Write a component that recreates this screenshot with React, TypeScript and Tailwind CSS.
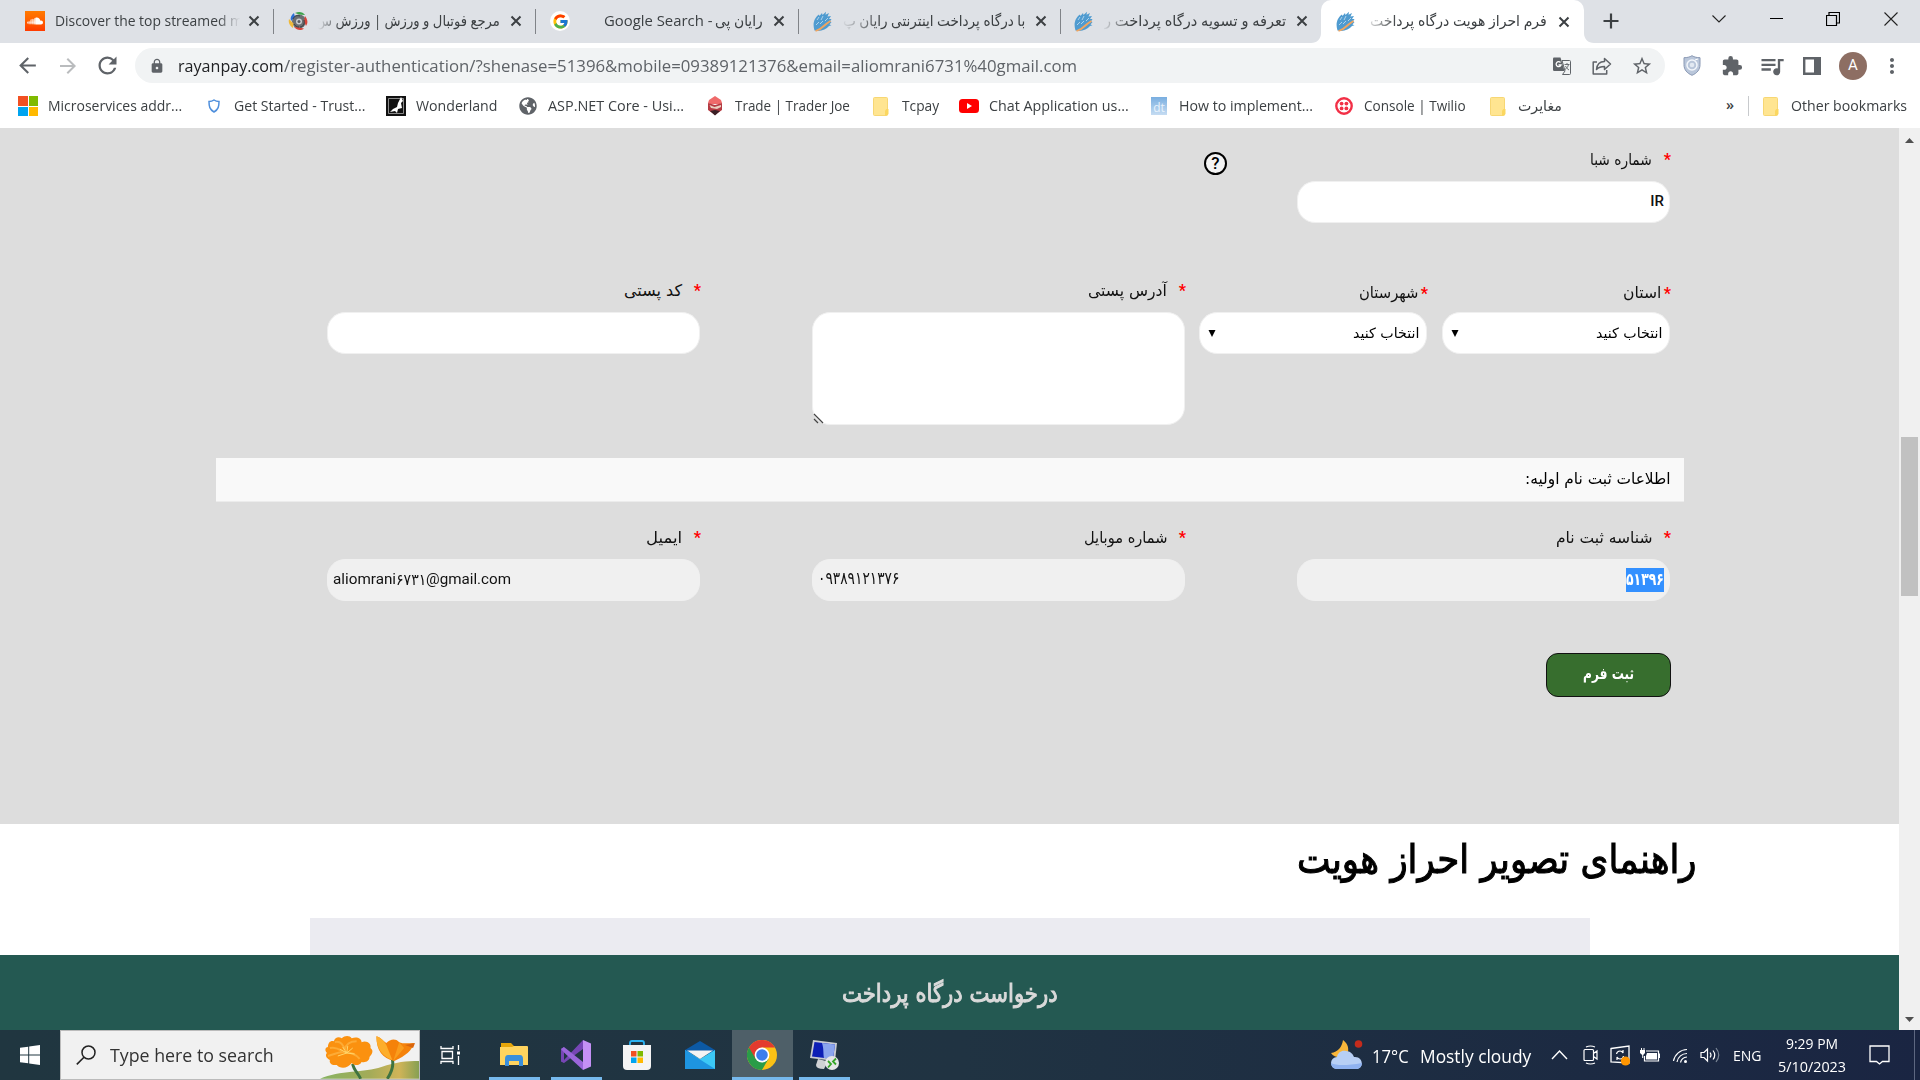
import React, { useLayoutEffect, useRef } from "react";
import {
  MdArrowBack,
  MdArrowForward,
  MdRefresh,
  MdLock,
  MdStarBorder,
  MdExtension,
  MdQueueMusic,
  MdMoreVert,
} from "react-icons/md";
import { FcGoogle } from "react-icons/fc";
import { FaSoundcloud, FaGlobeAmericas } from "react-icons/fa";

/* Single line of text stretched or condensed to the width of its own box. */
function Fit({ className, children, rtl = false }: { className: string; children: React.ReactNode; rtl?: boolean }) {
  const box = useRef<HTMLDivElement>(null);
  const text = useRef<HTMLSpanElement>(null);
  useLayoutEffect(() => {
    if (box.current && text.current) {
      const k = box.current.clientWidth / text.current.offsetWidth;
      text.current.style.transform = `scaleX(${k})`;
    }
  }, []);
  return (
    <div ref={box} dir={rtl ? "rtl" : "ltr"} className={"shrink-0 whitespace-nowrap " + className}>
      <span ref={text} className={rtl ? "inline-block origin-right" : "inline-block origin-left"}>
        {children}
      </span>
    </div>
  );
}

function CloseX({ className = "" }: { className?: string }) {
  return (
    <svg viewBox="0 0 12 12" className={"h-[12px] w-[12px] shrink-0 " + className}>
      <path d="M1.5 1.5l9 9M10.5 1.5l-9 9" stroke="#3c4043" strokeWidth="2" />
    </svg>
  );
}

function RayanIcon() {
  return (
    <svg viewBox="0 0 20 21" className="h-[21px] w-[20px] shrink-0">
      <path d="M1.500 19.500C-1 12 2 6 6 3.500l.5 1.500L9 2l.5 2L13 .8l-.5 3L16 2l-1.500 3.500L18 5l-2 3 2.500 0-1.500 2.500 1.500 .5-2 2.500 2 .8-2.500 .8C13 19 7 21 1.500 19.500z" fill="#4f9bd0" />
      <path d="M4 9l2-3M8 9l2-4M3 14l3-3M12 10l3-3M7 13l3-3" stroke="#d8e9f5" strokeWidth=".7" />
      <path d="M2.500 20c5-1.500 7-3.500 9.500-6 2-2 4-3 5.500-4" stroke="#f0a560" strokeWidth="1.800" fill="none" />
    </svg>
  );
}

function Folder() {
  return (
    <svg viewBox="0 0 16 19" className="h-[19px] w-[16px] shrink-0">
      <rect x=".5" y=".5" width="14" height="18" rx="1" fill="#ffe591" stroke="#f7d774" />
      <path d="M12 18.500v-5l1.500-1.500h2v5l-1.500 1.500z" fill="#fbd75f" />
    </svg>
  );
}

function PinwheelIcon() {
  return (
    <svg viewBox="0 0 20 20" className="h-[20px] w-[20px] shrink-0">
      <circle cx="11" cy="10.500" r="7" fill="#6b6e72" />
      <circle cx="11" cy="10.500" r="3" fill="#c9ccd0" />
      <circle cx="11" cy="10.500" r="1.500" fill="#5b5e62" />
      <path d="M6 2c-3 2-4 5-3 8l4-4z" fill="#2b6fd6" />
      <path d="M7 2c4-2 8-1 10 2l-6-.5z" fill="#3ba24b" />
      <path d="M1 8c-1 4 1 7 4 9l.5-4.500z" fill="#efb93a" />
      <path d="M17 5c3 4 3 7 1 10l-2-5z" fill="#d8443a" />
      <path d="M6 16c3 3.500 7 4 10 1.500l-5-1z" fill="#d8443a" />
      <path d="M5 8c1-3 4-4 7-3M16 9c1 4-1 7-4 7M6 13c1 2 3 3 5 3" stroke="#3c3e42" fill="none" />
    </svg>
  );
}

const sep = "h-[25px] w-[1px] shrink-0 bg-[#808388]";

function TabStrip() {
  return (
    <div className="flex h-[43px] items-start bg-[#dee1e6] text-[15px] text-[#3c4043]">
      <div className="flex h-[42px] w-[1311px] shrink-0 items-center">
        <div className="ml-[25px] flex h-[20px] w-[20px] shrink-0 items-center justify-center bg-gradient-to-b from-[#ff7a00] to-[#ff3a00]">
          <FaSoundcloud className="h-[16px] w-[16px] text-white" />
        </div>
        <div className="ml-[10px] w-[188px] shrink-0 pb-[1px] [mask-image:linear-gradient(to_right,#000_163px,transparent_185px)]">
          <Fit className="w-[188px]">Discover the top streamed m</Fit>
        </div>
        <CloseX className="ml-[5px]" />
        <div className={"ml-[13px] " + sep} />
        <div className="ml-[14px]"><PinwheelIcon /></div>
        <div className="ml-[8px] w-[184px] shrink-0 pb-[1px] [mask-image:linear-gradient(to_left,#000_160px,transparent_182px)]">
          <Fit rtl className="w-[184px]">مرجع فوتبال و ورزش | ورزش س</Fit>
        </div>
        <CloseX className="ml-[10px]" />
        <div className={"ml-[13px] " + sep} />
        <div className="ml-[14px] flex h-[20px] w-[20px] shrink-0 items-center justify-center rounded-full bg-white">
          <FcGoogle className="h-[17px] w-[17px]" />
        </div>
        <Fit className="ml-[34px] w-[108px] pb-[1px]">Google Search -</Fit>
        <Fit rtl className="ml-[3px] w-[48px] pb-[1px]">رایان پی</Fit>
        <CloseX className="ml-[10px]" />
        <div className={"ml-[13px] " + sep} />
        <div className="ml-[14px]"><RayanIcon /></div>
        <div className="ml-[10px] w-[182px] shrink-0 pb-[1px] [mask-image:linear-gradient(to_left,#000_145px,transparent_184px)]">
          <Fit rtl className="w-[182px]">با درگاه پرداخت اینترنتی رایان پ</Fit>
        </div>
        <CloseX className="ml-[10px]" />
        <div className={"ml-[13px] " + sep} />
        <div className="ml-[13px]"><RayanIcon /></div>
        <div className="ml-[10px] w-[182px] shrink-0 pb-[1px] [mask-image:linear-gradient(to_left,#000_155px,transparent_184px)]">
          <Fit rtl className="w-[182px]">تعرفه و تسویه درگاه پرداخت ر</Fit>
        </div>
        <CloseX className="ml-[10px]" />
      </div>
      <svg viewBox="0 0 10 43" className="h-[43px] w-[10px] shrink-0">
        <path d="M10 33v10H0c6 0 10-4 10-10z" fill="#fff" />
      </svg>
      <div className="flex h-[43px] w-[263px] shrink-0 items-center rounded-t-[10px] bg-white">
        <div className="ml-[15px]"><RayanIcon /></div>
        <div className="ml-[14px] w-[177px] shrink-0 pb-[2px] [mask-image:linear-gradient(to_left,#000_150px,rgba(0,0,0,0.2)_177px)]">
          <Fit rtl className="w-[177px]">فرم احراز هویت درگاه پرداخت</Fit>
        </div>
        <CloseX className="ml-[11px]" />
      </div>
      <svg viewBox="0 0 10 43" className="h-[43px] w-[10px] shrink-0">
        <path d="M0 33v10h10C4 43 0 39 0 33z" fill="#fff" />
      </svg>
      <svg viewBox="0 0 16 16" className="mt-[13px] ml-[9px] h-[16px] w-[16px] shrink-0">
        <path d="M8 .5v15M.5 8h15" stroke="#3c4043" strokeWidth="2.200" />
      </svg>
      <svg viewBox="0 0 14 8" className="mt-[15px] ml-[93px] h-[8px] w-[14px] shrink-0">
        <path d="M.5 .5L7 7 13.500 .5" stroke="#222" strokeWidth="1.100" fill="none" />
      </svg>
      <div className="mt-[18px] ml-[44px] h-[1px] w-[13px] shrink-0 bg-black" />
      <svg viewBox="0 0 14 14" className="mt-[12px] ml-[43px] h-[14px] w-[14px] shrink-0">
        <path d="M.5 3.500h10v10H.5zM3 3.500V.5h10.500v10.500h-3" stroke="#000" strokeWidth="1.200" fill="none" />
      </svg>
      <svg viewBox="0 0 14 14" className="mt-[12px] ml-[44px] h-[14px] w-[14px] shrink-0">
        <path d="M.5 .5l13 13M13.500 .5l-13 13" stroke="#222" strokeWidth="1.100" />
      </svg>
    </div>
  );
}

function Toolbar() {
  return (
    <div className="flex h-[45px] items-center bg-white text-[#5f6368]">
      <MdArrowBack className="ml-[15px] h-[25px] w-[25px] shrink-0" />
      <MdArrowForward className="ml-[16px] h-[24px] w-[24px] shrink-0 text-[#babcbe]" />
      <MdRefresh className="ml-[14px] h-[27px] w-[27px] shrink-0" />
      <div className="ml-[14px] flex h-[35px] w-[1530px] shrink-0 items-center rounded-full bg-[#f1f3f4]">
        <MdLock className="ml-[14px] h-[16px] w-[16px] shrink-0" />
        <Fit className="ml-[13px] w-[106px] text-[17px] text-[#202124]">rayanpay.com</Fit>
        <Fit className="w-[793px] text-[17px] text-[#5f6368]">
          /register-authentication/?shenase=51396&amp;mobile=09389121376&amp;email=aliomrani6731%40gmail.com
        </Fit>
        <svg viewBox="0 0 18 18" className="ml-[476px] h-[18px] w-[18px] shrink-0">
          <path d="M1 .5h6.500L11.500 14H1.200Q0 14 0 12.800V1.500Q0 .5 1 .5z" fill="#5f6368" />
          <path d="M9 3.500h7.500q1 0 1 1v12q0 1-1 1H9.500L12 14z" fill="#f1f3f4" stroke="#5f6368" />
          <path d="M7.500 5.500A2.500 2.500 0 1 0 8 8H5.500" stroke="#fff" strokeWidth="1.300" fill="none" />
          <path d="M11.500 7.500h5M14 6v1.500M15.500 7.500c-.5 2.500-2 4-3.500 5M12.500 9c1 2 2 3 3.500 4" stroke="#5f6368" strokeWidth=".9" fill="none" />
        </svg>
        <svg viewBox="0 0 20 18" className="ml-[21px] h-[18px] w-[20px] shrink-0">
          <path d="M5 5H1.200v12h13.500v-4M4.500 12.500c.5-5 3.500-8 8-8V1.500L18.500 7l-6 5.500V9.500c-3.500 0-6 .8-8 3z" stroke="#5f6368" strokeWidth="1.500" fill="none" strokeLinejoin="round" />
        </svg>
        <MdStarBorder className="ml-[19px] h-[22px] w-[22px] shrink-0" />
      </div>
      <svg viewBox="0 0 18 21" className="ml-[18px] h-[21px] w-[18px] shrink-0">
        <path d="M9 .7c2.500 1.500 5 2 8 2v7c0 5-3 8.500-8 10.600C4 18.200 1 14.700 1 9.700v-7c3 0 5.500-.5 8-2z" fill="#b9c6da" stroke="#8998b3" />
        <circle cx="9" cy="10" r="5" fill="none" stroke="#f2f6fb" strokeWidth="1.500" />
        <circle cx="9" cy="10" r="2.300" fill="#e2e9f2" />
        <path d="M12 5l3-1" stroke="#fff" />
      </svg>
      <MdExtension className="ml-[20px] h-[22px] w-[22px] shrink-0" />
      <MdQueueMusic className="ml-[15px] h-[28px] w-[28px] shrink-0" />
      <svg viewBox="0 0 18 18" className="ml-[17px] h-[18px] w-[18px] shrink-0">
        <path d="M1.200 1.200h15.600v15.600H1.200z" fill="none" stroke="#5f6368" strokeWidth="2.400" />
        <path d="M11 1h6v16h-6z" fill="#5f6368" />
      </svg>
      <div className="ml-[18px] flex h-[28px] w-[28px] shrink-0 items-center justify-center rounded-full bg-[#8d6e63] font-[Roboto] text-[15px] text-white">
        A
      </div>
      <MdMoreVert className="ml-[13px] h-[24px] w-[24px] shrink-0" />
    </div>
  );
}

function Bookmarks() {
  return (
    <div className="flex h-[40px] items-center bg-white pb-[4px] text-[14.500px] text-[#3c4043]">
      <div className="ml-[18px] grid h-[20px] w-[20px] shrink-0 grid-cols-2 gap-[1px]">
        <i className="bg-[#f25022]" /><i className="bg-[#7fba00]" /><i className="bg-[#00a4ef]" /><i className="bg-[#ffb900]" />
      </div>
      <Fit className="ml-[10px] w-[134px]">Microservices addr...</Fit>
      <svg viewBox="0 0 12 14" className="ml-[26px] h-[14px] w-[12px] shrink-0">
        <path d="M6 1c1.500 1 3 1.400 5 1.400 0 5-.6 8-5 10.600C1.600 10.400 1 7.400 1 2.400 3 2.400 4.500 2 6 1z" fill="none" stroke="#4f8fdc" strokeWidth="1.500" />
      </svg>
      <Fit className="ml-[14px] w-[131px]">Get Started - Trust...</Fit>
      <svg viewBox="0 0 20 20" className="ml-[21px] h-[20px] w-[20px] shrink-0">
        <path d="M0 0h20v20H0z" fill="#111" />
        <path d="M2.500 2.500h15v15h-15z" stroke="#aaa" strokeWidth=".8" fill="none" />
        <path d="M15 1l2 4-2 2 1 5-4 1-1 4-2-2-5 1 3-3 4-2 1-4z" fill="#fff" />
      </svg>
      <Fit className="ml-[10px] w-[81px]">Wonderland</Fit>
      <div className="ml-[22px]"><FaGlobeAmericas className="h-[18px] w-[18px] text-[#5f6368]" /></div>
      <Fit className="ml-[11px] w-[136px]">ASP.NET Core - Usi...</Fit>
      <svg viewBox="0 0 16 20" className="ml-[23px] h-[20px] w-[16px] shrink-0">
        <path d="M8 0l6 4 1 3-2 1H3L1 7l1-3z" fill="#ef6a6a" />
        <path d="M1 7l7 2 7-2v7l-7 5-7-5z" fill="#b53a42" />
        <path d="M2.500 9l5 2L14 9v2l-4 2-6-1z" fill="#e9cfc0" />
        <path d="M3 15l5-1 5 1-5 4.500z" fill="#3a2026" />
      </svg>
      <Fit className="ml-[12px] w-[115px]">Trade | Trader Joe</Fit>
      <div className="ml-[23px]"><Folder /></div>
      <Fit className="ml-[13px] w-[37px]">Tcpay</Fit>
      <svg viewBox="0 0 20 14" className="ml-[20px] h-[14px] w-[20px] shrink-0">
        <rect width="20" height="14" rx="3.500" fill="#f00" />
        <path d="M8 4l5 3-5 3z" fill="#fff" />
      </svg>
      <Fit className="ml-[10px] w-[140px]">Chat Application us...</Fit>
      <div className="ml-[22px] flex h-[18px] w-[16px] shrink-0 items-end justify-center bg-gradient-to-b from-[#79aee0] to-[#c5dcf2] text-[12px] leading-[14px] text-[#e8f2fc]">dt</div>
      <Fit className="ml-[12px] w-[134px]">How to implement...</Fit>
      <svg viewBox="0 0 18 18" className="ml-[22px] h-[18px] w-[18px] shrink-0">
        <circle cx="9" cy="9" r="7.700" fill="none" stroke="#f22f46" strokeWidth="2.400" />
        <g fill="#f22f46"><circle cx="6.600" cy="6.600" r="1.900" /><circle cx="11.400" cy="6.600" r="1.900" /><circle cx="6.600" cy="11.400" r="1.900" /><circle cx="11.400" cy="11.400" r="1.900" /></g>
      </svg>
      <Fit className="ml-[11px] w-[102px]">Console | Twilio</Fit>
      <div className="ml-[24px]"><Folder /></div>
      <Fit rtl className="ml-[12px] w-[44px]">مغایرت</Fit>
      <Fit className="ml-[164px] w-[8px] pb-[2px] font-semibold">»</Fit>
      <div className="ml-[14px] h-[20px] w-[1px] shrink-0 bg-[#c8cacd]" />
      <div className="ml-[14px]"><Folder /></div>
      <Fit className="ml-[12px] w-[116px]">Other bookmarks</Fit>
    </div>
  );
}

function Label({ className, children, tight = false }: { className: string; children: React.ReactNode; tight?: boolean }) {
  return (
    <div dir="rtl" className="mb-[7px] flex h-[26px] items-center text-[16px] text-[#111]">
      <span className={tight ? "-mr-[1px] w-[10px] pt-[3px] font-[Roboto] text-[16px] font-bold text-[#f00]" : "-mr-[1px] w-[19px] pb-[3px] font-[Roboto] text-[16px] font-bold text-[#f00]"}>*</span>
      <Fit rtl className={(tight ? "pt-[1px] " : "pb-[2px] ") + className}>{children}</Fit>
    </div>
  );
}

const control = "flex h-[42px] items-center rounded-[18px] border border-[#f0f0f0]";

function Select() {
  return (
    <div className={control + " w-[228px] justify-between bg-white pr-[7px] pl-[8px]"}>
      <Fit rtl className="w-[66px] pt-[1px] text-[14px] text-black">انتخاب کنید</Fit>
      <svg viewBox="0 0 8 7" className="h-[7px] w-[8px]"><path d="M.5 0h7L4 7z" fill="#000" /></svg>
    </div>
  );
}

function FormArea() {
  return (
    <div dir="rtl" className="flex h-[696px] flex-col bg-[#ddd] pt-[20px]">
      <div className="flex h-[75px] items-start pr-[229px]">
        <div className="w-[373px]">
          <Label className="w-[62px]">شماره شبا</Label>
          <div className={control + " bg-white pr-[5px]"}>
            <span className="pb-[2px] font-[Roboto] text-[15px] font-medium text-[#111]">IR</span>
          </div>
        </div>
        <div className="mt-[4px] mr-[70px] flex h-[23px] w-[23px] items-center justify-center rounded-full border-2 border-black bg-[#f4f4f4] font-[Roboto] text-[17px] font-medium text-black">
          ?
        </div>
      </div>

      <div className="mt-[56px] flex h-[146px] items-start pr-[229px]">
        <div className="w-[228px]"><Label tight className="w-[38px]">استان</Label><Select /></div>
        <div className="mr-[15px] w-[228px]"><Label tight className="w-[59px]">شهرستان</Label><Select /></div>
        <div className="mr-[14px] w-[373px]">
          <Label className="w-[79px]">آدرس پستی</Label>
          <div className="flex h-[113px] items-end justify-end rounded-[18px] border border-[#f0f0f0] bg-white">
            <svg viewBox="0 0 11 11" className="h-[11px] w-[11px]"><path d="M1 1l9 9M1 6l4 4" stroke="#444" strokeWidth="1.200" /></svg>
          </div>
        </div>
        <div className="mr-[112px] w-[373px]">
          <Label className="w-[58px]">کد پستی</Label>
          <div className={control + " bg-white"} />
        </div>
      </div>

      <div className="mt-[33px] mr-[215px] flex h-[44px] w-[1468px] items-center border-b border-[#ececec] bg-[#f9f9f9] pr-[13px]">
        <Fit rtl className="w-[146px] pb-[1px] text-[16px] text-black">اطلاعات ثبت نام اولیه:</Fit>
      </div>

      <div className="mt-[24px] flex h-[75px] items-start pr-[229px]">
        <div className="w-[373px]">
          <Label className="w-[97px]">شناسه ثبت نام</Label>
          <div className={control + " bg-[#f0f0f0] pr-[5px]"}>
            <div className="flex h-[24px] w-[38px] items-center bg-[#3390ff]">
              <Fit rtl className="w-[38px] pb-[2px] text-[17px] leading-[22px] font-bold text-white">۵۱۳۹۶</Fit>
            </div>
          </div>
        </div>
        <div className="mr-[112px] w-[373px]">
          <Label className="w-[83px]">شماره موبایل</Label>
          <div dir="ltr" className={control + " bg-[#f0f0f0] pl-[5px] text-[17px] text-[#111]"}>
            <Fit className="w-[81px] pb-[2px]">۰۹۳۸۹۱۲۱۳۷۶</Fit>
          </div>
        </div>
        <div className="mr-[112px] w-[373px]">
          <Label className="w-[36px]">ایمیل</Label>
          <div dir="ltr" className={control + " bg-[#f0f0f0] pb-[1px] pl-[5px] font-[Roboto,'DejaVu_Sans'] text-[15px] text-[#111]"}>
            <Fit className="w-[63px]">aliomrani</Fit>
            <Fit className="w-[30px] text-[16px]">۶۷۳۱</Fit>
            <Fit className="w-[85px]">@gmail.com</Fit>
          </div>
        </div>
      </div>

      <div className="mt-[52px] mr-[228px] flex h-[44px] w-[125px] items-center justify-center rounded-[12px] border border-[#111] bg-[#376e2e]">
        <Fit rtl className="w-[51px] pb-[1px] text-[15.500px] font-bold text-white">ثبت فرم</Fit>
      </div>
    </div>
  );
}

function Page() {
  return (
    <div className="flex h-[902px]">
      <div className="w-[1899px] font-['DejaVu_Sans']">
        <FormArea />
        <div dir="rtl" className="flex h-[131px] flex-col bg-white">
          <div className="mr-[202px] flex h-[94px] items-center pb-[24px]">
            <Fit rtl className="w-[400px] text-[40px] leading-[44px] text-black [-webkit-text-stroke:1.1px_#000]">راهنمای تصویر احراز هویت</Fit>
          </div>
          <div className="mr-[309px] h-[37px] w-[1280px] bg-[#ebebf1]" />
        </div>
        <div className="flex h-[75px] items-center justify-center bg-[#245952]">
          <Fit rtl className="w-[216px] pt-[2px] text-[25px] leading-[30px] text-[#dadada] [-webkit-text-stroke:1px_#dadada]">درخواست درگاه پرداخت</Fit>
        </div>
      </div>
      <div className="flex w-[21px] flex-col items-center bg-[#f0f0f0]">
        <svg viewBox="0 0 9 5" className="mt-[10px] h-[5px] w-[9px]"><path d="M0 5L4.500 0 9 5z" fill="#505050" /></svg>
        <div className="mt-[294px] h-[159px] w-[17px] bg-[#c1c1c1]" />
        <svg viewBox="0 0 9 5" className="mt-[421px] h-[5px] w-[9px]"><path d="M0 0h9L4.500 5z" fill="#505050" /></svg>
      </div>
    </div>
  );
}

function Flowers() {
  return (
    <svg viewBox="0 0 100 48" className="ml-[46px] h-[48px] w-[99px] shrink-0">
      <defs>
        <linearGradient id="hill" x1="0" x2="1">
          <stop offset="0" stopColor="#86b362" />
          <stop offset=".5" stopColor="#a3ab58" />
          <stop offset=".8" stopColor="#d0b458" />
          <stop offset="1" stopColor="#86a052" />
        </linearGradient>
      </defs>
      <path d="M0 48c20-9 45-6 62-12 15-5 25-6 38-6v18z" fill="url(#hill)" />
      <path d="M33 33c1 6 6 10 8 15M73 28c2 8-1 14-5 20" stroke="#3f7340" strokeWidth="3" fill="none" />
      <path d="M8 16c0-5 3-7 6-6 1-4 5-5 8-3 3-3 8-3 10 0 5-2 10 0 10 4 6-2 10 2 9 6 4 3 1 7-1 9 0 4-4 6-8 5-2 4-7 4-10 1-4 6-12 6-15 2-5 1-8-2-7-5-4-2-5-5-3-7-3-3-1-6 1-6z" fill="#fb910f" />
      <path d="M15 11c4-1 8 1 10 8 1-6 5-9 12-9M8 25c5-1 10-4 16-4 7 0 12 2 16 7M10 17c4-1 8 0 12 3" stroke="#fdab35" strokeWidth="2" fill="none" />
      <path d="M27 22l-7-4M27 22l-4-6M27 22l1-7M27 22l6-5M27 22l8 1M27 22l-9 3" stroke="#ffd66a" />
      <path d="M57 5c4 1 6 4 10 7 4-4 9-5 13-1 4 2 9 1 15 1-2 7-8 13-20 18C63 27 57 20 57 5z" fill="#f5820a" />
      <path d="M57 5c4 1 8 5 10 9l6 15C63 25 57 18 57 5z" fill="#fdae2c" />
      <path d="M80 11l-6 19 11-13z" fill="#fa9c1c" />
      <path d="M86 14l10-2-2 5z" fill="#d9650c" />
    </svg>
  );
}

function Taskbar() {
  return (
    <div className="flex h-[50px] items-stretch bg-gradient-to-r from-[#203640] via-[#203342] to-[#1a2542] text-white">
      <div className="flex w-[60px] shrink-0 items-center pl-[20px]">
        <svg viewBox="0 0 20 20" className="h-[20px] w-[20px]">
          <path d="M0 2.800L8.200 1.700v7.800H0zM9.200 1.500L20 0v9.500H9.200zM0 10.500h8.200v7.800L0 17.200zM9.200 10.500H20V20L9.200 18.500z" fill="#fff" />
        </svg>
      </div>
      <div className="flex w-[360px] shrink-0 items-center border border-[#bbb] bg-[#f1f1f1]">
        <svg viewBox="0 0 20 20" className="ml-[15px] h-[20px] w-[20px] shrink-0">
          <circle cx="12.500" cy="7.500" r="6.500" fill="none" stroke="#222" strokeWidth="1.500" />
          <path d="M8 12.200L.8 19.400" stroke="#222" strokeWidth="1.600" />
        </svg>
        <Fit className="ml-[14px] w-[164px] text-[18px] text-[#333]">Type here to search</Fit>
        <Flowers />
      </div>
      <div className="flex w-[69px] shrink-0 items-center pl-[20px]">
        <svg viewBox="0 0 21 20" className="h-[20px] w-[21px]">
          <path d="M1 1v2.500h12V1M2 6.500h10.500v7H2zM1 19v-2.500h12V19M18.500 0v5M18.500 11v9" fill="none" stroke="#fff" strokeWidth="1.300" />
          <path d="M17 6.500h3v3h-3z" fill="#fff" />
        </svg>
      </div>
      <div className="flex w-[51px] shrink-0 items-center justify-center border-b-[3px] border-[#76b9ed]">
        <svg viewBox="0 0 28 23" className="mt-[1px] mr-[1px] h-[23px] w-[28px]">
          <path d="M1 0h10l3 3h13v5H1z" fill="#e5a50a" />
          <path d="M0 4h12l2-1h13q1 0 1 1v18H0z" fill="#ffd45e" />
          <path d="M5 23v-7q0-4 3-4h12q3 0 3 4v7h-4v-5h-10v5z" fill="#3a8fdb" />
        </svg>
      </div>
      <div className="ml-[11px] flex w-[51px] shrink-0 items-center justify-center border-b-[3px] border-[#76b9ed]">
        <svg viewBox="0 0 30 30" className="mt-[3px] mr-[1px] h-[30px] w-[30px]">
          <path d="M0 21.500V9L3 7v15.500z" fill="#7646b5" />
          <path d="M22 0v9L3 23l-3-1.500L3 20z" fill="#7646b5" />
          <path d="M0 9l3-2 19 15v8L3 12.500z" fill="#9a66da" />
          <path d="M22 0l8 3.500v23L22 30z" fill="#c490f5" />
        </svg>
      </div>
      <div className="ml-[20px] flex w-[30px] shrink-0 items-center justify-center">
        <svg viewBox="0 0 30 30" className="h-[30px] w-[30px]">
          <path d="M8 6V3q0-2 2-2h10q2 0 2 2v3" stroke="#2bb3f3" strokeWidth="1.800" fill="none" />
          <path d="M1 5h28v21q0 4-4 4H5q-4 0-4-4z" fill="#f4f4f4" />
          <path d="M9 11h5.500v5.500H9z" fill="#f25022" /><path d="M15.500 11H21v5.500h-5.500z" fill="#7fba00" />
          <path d="M9 17.500h5.500V23H9z" fill="#00a4ef" /><path d="M15.500 17.500H21V23h-5.500z" fill="#ffb900" />
        </svg>
      </div>
      <div className="ml-[33px] flex w-[30px] shrink-0 items-center justify-center">
        <svg viewBox="0 0 30 28" className="h-[28px] w-[30px]">
          <path d="M0 9L15 0l15 9v4H0z" fill="#0c59a4" />
          <path d="M0 9l15 9 15-9v19H0z" fill="#3cc8f5" />
          <path d="M0 9l30 19H0z" fill="#1e95e0" />
          <path d="M2 9.500h26L15 18z" fill="#f4f4f4" />
        </svg>
      </div>
      <div className="ml-[17px] flex w-[61px] shrink-0 items-center justify-center border-b-[3px] border-[#76b9ed] bg-[#4e5f68]">
        <svg viewBox="0 0 30 30" className="mt-[3px] mr-[2px] h-[30px] w-[30px]">
          <circle cx="15" cy="15" r="15" fill="#fbc116" />
          <path d="M15 15L2 7.500A15 15 0 0 0 15 30l6.500-11.200z" fill="#2a9c48" />
          <path d="M2 7.500A15 15 0 0 1 28 7.500H15l-6.500 11.200z" fill="#e33b2e" />
          <circle cx="15" cy="15" r="7.400" fill="#fff" />
          <circle cx="15" cy="15" r="5.800" fill="#3b7ded" />
        </svg>
      </div>
      <div className="ml-[6px] flex w-[51px] shrink-0 items-center justify-center border-b-[3px] border-[#76b9ed]">
        <svg viewBox="0 0 30 30" className="mt-[3px] h-[30px] w-[30px]">
          <path d="M8 19l8 2v4l-2 4q-8 0-8-4z" fill="#d0d2d5" />
          <path d="M3 0l24 3-2 18L0 18z" fill="#c9ccd2" />
          <path d="M4.500 2l20.500 2.500-2 14.500L2 16.500z" fill="#0d1fb5" />
          <path d="M12 3l13 1.500-2 14.500-9-1c-1-5 0-9-2-15z" fill="#8ba5ee" />
          <circle cx="22" cy="23" r="7" fill="#e6e6e6" />
          <path d="M18 21l3 3-3 3.500M26 18.500l-3 3 3 3" stroke="#35a527" strokeWidth="1.800" fill="none" />
        </svg>
      </div>

      <div className="ml-[481px] flex shrink-0 items-center">
        <svg viewBox="0 0 32 30" className="h-[30px] w-[32px]">
          <path d="M12 0c-1 7-5 12-12 13 4 6 14 6 17-1 1-5-1-9-5-12z" fill="#f9b63a" />
          <path d="M6 29a6 6 0 0 1 0-12c1-5 5-7 9-6 4 0 7 3 8 6 10-1 10 12 2 12z" fill="#b7cff5" />
          <path d="M5 29q-5-1-5-6 8 4 31 0 0 5-5 6z" fill="#8fb2f0" />
          <circle cx="27.500" cy="4" r="3.800" fill="#c42b1c" />
        </svg>
        <Fit className="ml-[9px] w-[37px] pt-[2px] text-[18px]">17°C</Fit>
        <Fit className="ml-[11px] w-[111px] pt-[2px] text-[18px]">Mostly cloudy</Fit>
        <svg viewBox="0 0 17 10" className="ml-[20px] h-[10px] w-[17px]"><path d="M1 9l7.500-8L16 9" stroke="#fff" strokeWidth="1.400" fill="none" /></svg>
        <svg viewBox="0 0 15 20" className="ml-[15px] h-[20px] w-[15px]">
          <path d="M3 2q4.500-2 9 0M3 18q4.500 2 9 0M1 5.500q0-1 1-1h7.500q1 0 1 1v9q0 1-1 1H2q-1 0-1-1zM10.500 8.500L14 6v8l-3.500-2.500" stroke="#fff" strokeWidth="1.200" fill="none" />
        </svg>
        <svg viewBox="0 0 21 21" className="ml-[12px] h-[21px] w-[21px]">
          <path d="M1 3.500L19 1v17L1 17z" stroke="#fff" strokeWidth="1.300" fill="none" />
          <path d="M6.500 9q.5-3 3.500-3 2 0 3 2V5M13.500 11q-.5 3-3.500 3-2 0-3-2v3" stroke="#fff" strokeWidth="1.200" fill="none" />
          <circle cx="15.500" cy="16" r="4.600" fill="#ff9500" />
        </svg>
        <svg viewBox="0 0 20 14" className="ml-[9px] h-[14px] w-[20px]">
          <path d="M6 3h12.500v10H4.500V8" stroke="#fff" strokeWidth="1.200" fill="none" />
          <path d="M7 5h10v6.500H6V8zM18.500 5.500H20v4.500h-1.500zM0 2h5v3L3.200 7v3h-1V7L0 5zM1 0h1v2H1zM3.500 0h1v2h-1z" fill="#fff" />
        </svg>
        <svg viewBox="0 0 17 17" className="ml-[12px] h-[17px] w-[17px]">
          <path d="M1.500 14A14 14 0 0 1 15 2.500M5 15A10 10 0 0 1 15 6.500M8.500 15.500A7 7 0 0 1 15 10" stroke="#fff" strokeWidth="1.200" fill="none" />
          <circle cx="13.500" cy="14.500" r="1.500" fill="#fff" />
        </svg>
        <svg viewBox="0 0 21 16" className="ml-[11px] h-[16px] w-[21px]">
          <path d="M1 5.500h3L7.500 2v12L4 10.500H1z" stroke="#fff" strokeWidth="1.200" fill="none" />
          <path d="M10 5.500q2 2.500 0 5M13 3.500q3.500 4.500 0 9" stroke="#fff" strokeWidth="1.200" fill="none" />
          <path d="M16 1q5.500 7 0 14" stroke="#7c8797" strokeWidth="1.200" fill="none" />
        </svg>
        <Fit className="ml-[12px] w-[29px] text-[15px]">ENG</Fit>
        <div className="ml-[16px] flex flex-col items-center text-[15px] leading-[23px]">
          <Fit className="w-[52px]">9:29 PM</Fit>
          <Fit className="w-[68px]">5/10/2023</Fit>
        </div>
        <svg viewBox="0 0 21 20" className="ml-[23px] h-[20px] w-[21px]">
          <path d="M1 1h19v15.500h-6.500L10.500 19l-3-2.500H1z" stroke="#fff" strokeWidth="1.300" fill="none" />
        </svg>
        <div className="ml-[24px] h-[50px] w-[1px] bg-[#5d6780]" />
      </div>
    </div>
  );
}

export default function App() {
  return (
    <div className="h-[1080px] w-[1920px] overflow-hidden bg-white font-['Open_Sans','DejaVu_Sans',sans-serif]">
      <TabStrip />
      <Toolbar />
      <Bookmarks />
      <Page />
      <Taskbar />
    </div>
  );
}
